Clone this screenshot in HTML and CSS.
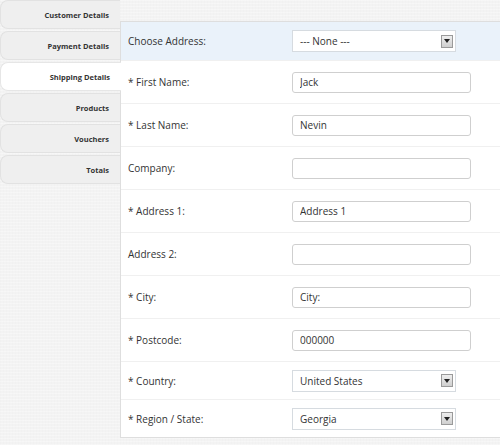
FILE: index.html
```html
<!DOCTYPE html>
<html lang="en">
<head>
    <meta charset="UTF-8">
    <title>Checkout - Shipping Details</title>
    <link rel="stylesheet" href="styles.css">
</head>
<body>
    <div class="wrap">
        <ul class="tabs">
            <li><a href="#">Customer Details</a></li>
            <li><a href="#">Payment Details</a></li>
            <li class="active"><a href="#">Shipping Details</a></li>
            <li><a href="#">Products</a></li>
            <li><a href="#">Vouchers</a></li>
            <li><a href="#">Totals</a></li>
        </ul>

        <div class="panel">
            <div class="row row-select row-hl">
                <label>Choose Address:</label>
                <div class="select"><span>--- None ---</span><i class="arrow"><svg width="6" height="4" viewBox="0 0 6 4"><path d="M0 0h6L3 4z" fill="#222"/></svg></i></div>
            </div>
            <div class="row">
                <label>* First Name:</label>
                <input type="text" value="Jack">
            </div>
            <div class="row">
                <label>* Last Name:</label>
                <input type="text" value="Nevin">
            </div>
            <div class="row">
                <label>Company:</label>
                <input type="text" value="">
            </div>
            <div class="row">
                <label>* Address 1:</label>
                <input type="text" value="Address 1">
            </div>
            <div class="row">
                <label>Address 2:</label>
                <input type="text" value="">
            </div>
            <div class="row">
                <label>* City:</label>
                <input type="text" value="City:">
            </div>
            <div class="row">
                <label>* Postcode:</label>
                <input type="text" value="000000">
            </div>
            <div class="row row-select">
                <label>* Country:</label>
                <div class="select"><span>United States</span><i class="arrow"><svg width="6" height="4" viewBox="0 0 6 4"><path d="M0 0h6L3 4z" fill="#222"/></svg></i></div>
            </div>
            <div class="row row-select">
                <label>* Region / State:</label>
                <div class="select"><span>Georgia</span><i class="arrow"><svg width="6" height="4" viewBox="0 0 6 4"><path d="M0 0h6L3 4z" fill="#222"/></svg></i></div>
            </div>
        </div>
    </div>
</body>
</html>
```

FILE: styles.css
```css
/* base */
html, body {
    margin: 0;
    padding: 0;
}

body {
    font-family: "Open Sans", Arial, sans-serif;
    color: #333;
    background-color: #f3f3f3;
    background-image:
        repeating-linear-gradient(0deg, rgba(255,255,255,0.3) 0 1px, transparent 1px 3px),
        repeating-linear-gradient(90deg, rgba(0,0,0,0.008) 0 1px, transparent 1px 3px);
    height: 445px;
    overflow: hidden;
}

.wrap {
    display: flex;
    align-items: flex-start;
}

/* tabs */
.tabs {
    list-style: none;
    margin: 0;
    padding: 0;
    width: 120px;
    flex: none;
    display: flex;
    flex-direction: column;
    gap: 2px;
}

.tabs li {
    height: 29px;
    box-sizing: border-box;
    background: #efefef;
    border: 1px solid #e2e2e2;
    border-right: none;
    border-radius: 8px 0 0 8px;
    display: flex;
    align-items: center;
    justify-content: flex-end;
    padding-right: 11px;
}

.tabs li a {
    font-size: 7.5px;
    font-weight: bold;
    color: #333;
    text-decoration: none;
}

.tabs li.active {
    background: #fff;
    border-color: #e6e6e6;
    position: relative;
    margin-right: -1px;
    z-index: 1;
}

/* form panel */
.panel {
    flex: 1;
    margin-top: 21px;
    background: #fff;
    border: 1px solid #dedede;
    border-right: none;
    min-width: 0;
}

.row {
    display: flex;
    align-items: center;
    height: 43px;
    padding: 0 0 0 7px;
    border-top: 1px solid #f0f0f0;
    box-sizing: border-box;
}

.row:first-child {
    border-top: none;
}

.row-select {
    height: 38px;
}

.row-hl {
    background: #eaf2fa;
}

.row label {
    width: 164px;
    font-size: 10px;
}

.row input {
    width: 179px;
    height: 21px;
    box-sizing: border-box;
    border: 1px solid #cfcfcf;
    border-radius: 3px;
    padding: 0 7px;
    font-family: "Open Sans", Arial, sans-serif;
    font-size: 10px;
    color: #333;
    outline: none;
}

.select {
    width: 164px;
    height: 22px;
    box-sizing: border-box;
    border: 1px solid #d6dbe0;
    background: #fff;
    display: flex;
    align-items: center;
    justify-content: space-between;
    padding: 0 2px 0 7px;
    font-size: 10px;
}

.select .arrow {
    width: 12px;
    height: 13px;
    box-sizing: border-box;
    border: 1px solid #9a9a9a;
    background: linear-gradient(#eee, #cfcfcf);
    display: flex;
    align-items: center;
    justify-content: center;
}
```
